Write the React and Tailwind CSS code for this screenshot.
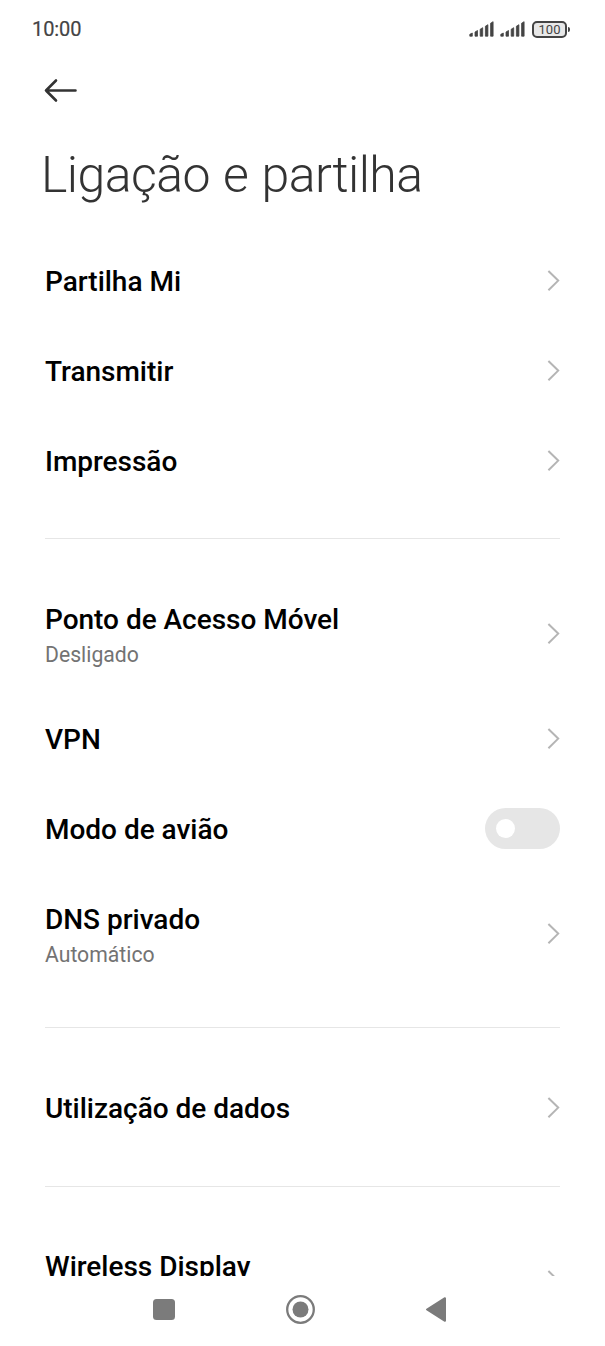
const groups = [
    [
        { title: "Partilha Mi" },
        { title: "Transmitir" },
        { title: "Impressão" },
    ],
    [
        { title: "Ponto de Acesso Móvel", value: "Desligado" },
        { title: "VPN" },
        { title: "Modo de avião", toggle: true },
        { title: "DNS privado", value: "Automático" },
    ],
    [{ title: "Utilização de dados" }],
    [{ title: "Wireless Display", value: "Desligado" }],
];

function Signal() {
    return (
        <svg width="26" height="18" viewBox="0 0 26 18" fill="#444" stroke="#444" strokeWidth="0.8" strokeLinejoin="round">
            <path d="M.8 14.3l2.5-1.3v3.2H.8zM6 12l2.5-1.5v5.7H6zM11.2 9.2l2.5-1.5v8.5h-2.5zM16.4 6.2l2.5-1.5v11.5h-2.5zM21.6 3.2l2.5-1.5v14.5h-2.5z" />
        </svg>
    );
}

function Chevron() {
    return (
        <svg className="shrink-0" width="14" height="24" viewBox="0 0 14 24" fill="none" stroke="#b5b5b5" strokeWidth="2">
            <path d="M2.4 2l9.8 9.6-9.8 9.6" />
        </svg>
    );
}

function Row({ item }) {
    return (
        <div className={"flex shrink-0 items-center justify-between " + (item.value ? "h-[120px]" : "h-[90px]")}>
            <div className={item.value ? "pt-[4px]" : "pt-[2px]"}>
                <h2 className="text-[28px] leading-[38px] font-medium tracking-[-0.02px] text-black">{item.title}</h2>
                {item.value && <p className="text-[21.2px] leading-[32px] text-[#737373]">{item.value}</p>}
            </div>
            {item.toggle ? (
                <button className="mb-px flex h-[41px] w-[75px] items-center rounded-full bg-[#e6e6e6] pl-[11px]">
                    <span className="h-[19px] w-[19px] rounded-full bg-white"></span>
                </button>
            ) : (
                <Chevron />
            )}
        </div>
    );
}

export default function App() {
    return (
        <div className="flex h-[1346px] w-[605px] flex-col overflow-hidden bg-white font-['Roboto',sans-serif]">
            {/* Status bar */}
            <div className="flex h-[58px] items-center justify-between pr-[35px] pl-[32px] text-[#444]">
                <span className="text-[20px] tracking-[-0.1px] [-webkit-text-stroke:0.2px_#444]">10:00</span>
                <div className="flex items-center">
                    <Signal />
                    <span className="w-[5px]"></span>
                    <Signal />
                    <span className="ml-[6px] flex h-[17px] w-[35px] items-center justify-center rounded-[5px] border-2 border-[#444] bg-[#e8e8e8] text-[13px] leading-none">
                        100
                    </span>
                    <span className="ml-px h-[5px] w-[2px] rounded-r-sm bg-[#444]"></span>
                </div>
            </div>

            {/* Header */}
            <header className="h-[178px] shrink-0 pt-[20px] pl-[41px]">
                <svg className="ml-[3px]" width="34" height="25" viewBox="0 0 34 25" fill="none" stroke="#333" strokeWidth="2.6" strokeLinecap="round" strokeLinejoin="round">
                    <path d="M12 2.5L2 12.5l10 10M2 12.5h29.5" />
                </svg>
                <h1 className="mt-[42px] text-[50px] leading-[60px] font-light tracking-[-0.55px] [word-spacing:1.5px] text-[#333]">Ligação e partilha</h1>
            </header>

            {/* Settings list */}
            <main className="flex h-[1040px] shrink-0 flex-col overflow-hidden px-[45px]">
                {groups.map((group, key) => (
                    <section key={key} className="shrink-0 border-b border-[#e6e6e6] pt-[35px] pb-[33px] first:pt-0 first:pb-[32px] last:pt-[34px]">
                        {group.map((item) => (
                            <Row key={item.title} item={item} />
                        ))}
                    </section>
                ))}
            </main>

            {/* Navigation bar */}
            <nav className="flex h-[70px] shrink-0 items-start">
                <svg width="605" height="70" viewBox="0 0 605 70" fill="#7b7b7b">
                    <rect x="153" y="23" width="22" height="21" rx="3.5" />
                    <circle cx="300.5" cy="33.5" r="13.3" fill="none" stroke="#7b7b7b" strokeWidth="2.3" />
                    <circle cx="300.5" cy="33.5" r="8" />
                    <path d="M427 33.5L445 22.2v22.6z" stroke="#7b7b7b" strokeWidth="2" strokeLinejoin="round" />
                </svg>
            </nav>
        </div>
    );
}
